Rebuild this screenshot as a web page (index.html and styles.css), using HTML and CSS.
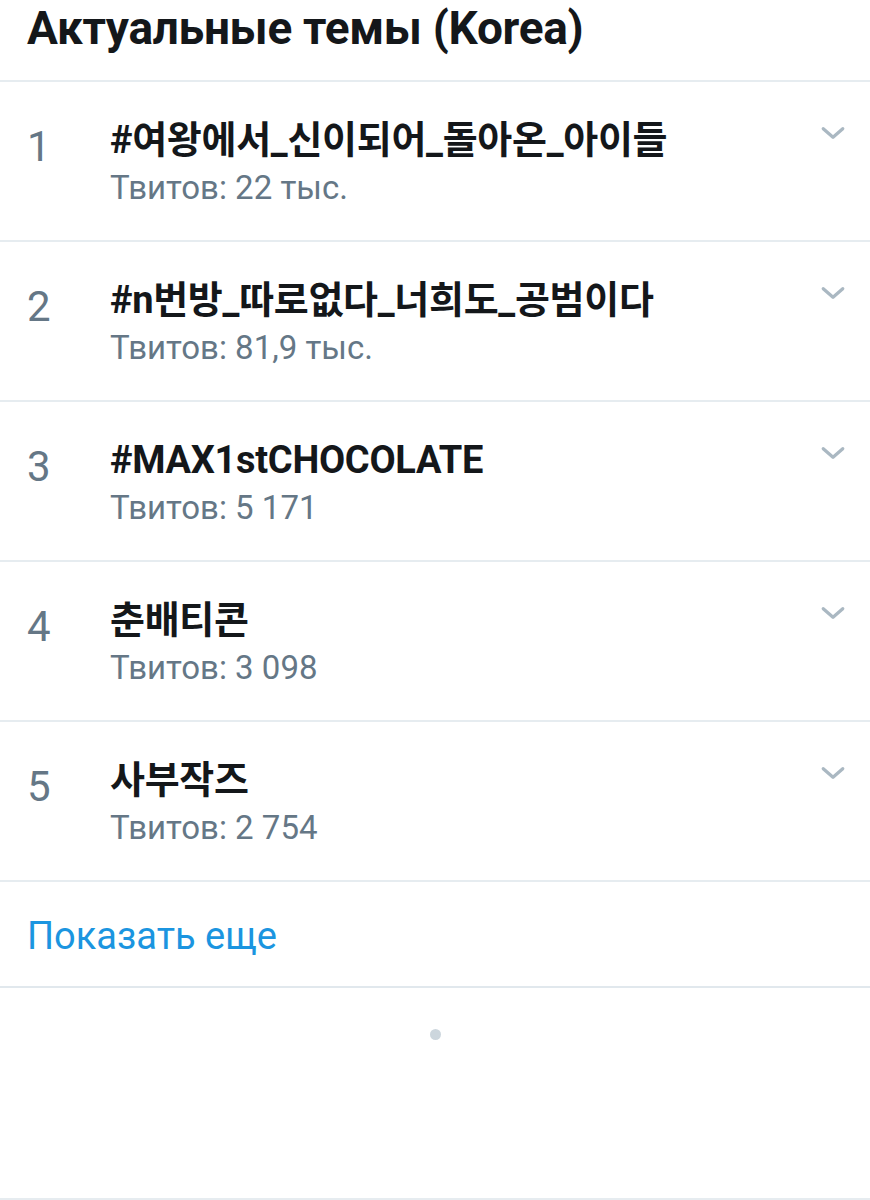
FILE: index.html
```html
<!DOCTYPE html>
<html lang="ru">
<head>
    <meta charset="UTF-8">
    <meta name="viewport" content="width=device-width, initial-scale=1.0">
    <title>Актуальные темы</title>
    <link rel="stylesheet" href="styles.css">
</head>
<body>
    <h1 class="header">Актуальные темы (Korea)</h1>

    <ul class="trends">
        <li class="trend">
            <span class="rank">1</span>
            <div class="info">
                <div class="name">#여왕에서_신이되어_돌아온_아이들</div>
                <div class="count">Твитов: 22 тыс.</div>
            </div>
            <svg class="chevron" viewBox="0 0 24 24"><path d="M3 8l9 8 9-8"/></svg>
        </li>
        <li class="trend">
            <span class="rank">2</span>
            <div class="info">
                <div class="name">#n번방_따로없다_너희도_공범이다</div>
                <div class="count">Твитов: 81,9 тыс.</div>
            </div>
            <svg class="chevron" viewBox="0 0 24 24"><path d="M3 8l9 8 9-8"/></svg>
        </li>
        <li class="trend">
            <span class="rank">3</span>
            <div class="info">
                <div class="name">#MAX1stCHOCOLATE</div>
                <div class="count">Твитов: 5 171</div>
            </div>
            <svg class="chevron" viewBox="0 0 24 24"><path d="M3 8l9 8 9-8"/></svg>
        </li>
        <li class="trend">
            <span class="rank">4</span>
            <div class="info">
                <div class="name">춘배티콘</div>
                <div class="count">Твитов: 3 098</div>
            </div>
            <svg class="chevron" viewBox="0 0 24 24"><path d="M3 8l9 8 9-8"/></svg>
        </li>
        <li class="trend">
            <span class="rank">5</span>
            <div class="info">
                <div class="name">사부작즈</div>
                <div class="count">Твитов: 2 754</div>
            </div>
            <svg class="chevron" viewBox="0 0 24 24"><path d="M3 8l9 8 9-8"/></svg>
        </li>
    </ul>

    <a class="show-more" href="#">Показать еще</a>

    <div class="loader">
        <span class="dot"></span>
    </div>
</body>
</html>
```

FILE: styles.css
```css
body {
    margin: 0;
    background: #fff;
    font-family: Roboto, "Noto Sans CJK KR", sans-serif;
    color: #14171a;
}

.header {
    margin: 0;
    height: 82px;
    padding: 0 27px;
    box-sizing: border-box;
    font-size: 46px;
    font-weight: 700;
    line-height: 56px;
    letter-spacing: -0.3px;
    border-bottom: 2px solid #e6ecf0;
}

.trends {
    list-style: none;
    margin: 0;
    padding: 0;
}

.trend {
    display: flex;
    align-items: flex-start;
    height: 160px;
    box-sizing: border-box;
    padding: 34px 24px 0 27px;
    border-bottom: 2px solid #e6ecf0;
}

.rank {
    width: 83px;
    flex-shrink: 0;
    font-size: 42px;
    line-height: 54px;
    margin-top: 4px;
    color: #657786;
}

.info {
    flex: 1;
}

.name {
    font-size: 38px;
    font-weight: 700;
    line-height: 48px;
    letter-spacing: -0.3px;
}

.count {
    margin-top: 4px;
    font-size: 33px;
    line-height: 40px;
    color: #657786;
}

.chevron {
    width: 26px;
    height: 26px;
    margin-top: 4px;
    fill: none;
    stroke: #aab8c2;
    stroke-width: 3;
    stroke-linecap: round;
    stroke-linejoin: round;
}

.show-more {
    display: block;
    height: 106px;
    box-sizing: border-box;
    padding: 0 27px;
    line-height: 108px;
    font-size: 38px;
    color: #1b95e0;
    text-decoration: none;
    border-bottom: 2px solid #e1e8ed;
}

.loader {
    height: 212px;
    display: flex;
    justify-content: center;
    padding-top: 41px;
    box-sizing: border-box;
    border-bottom: 2px solid #e6ecf0;
}

.dot {
    width: 11px;
    height: 11px;
    border-radius: 50%;
    background: #ccd6dd;
}
```
